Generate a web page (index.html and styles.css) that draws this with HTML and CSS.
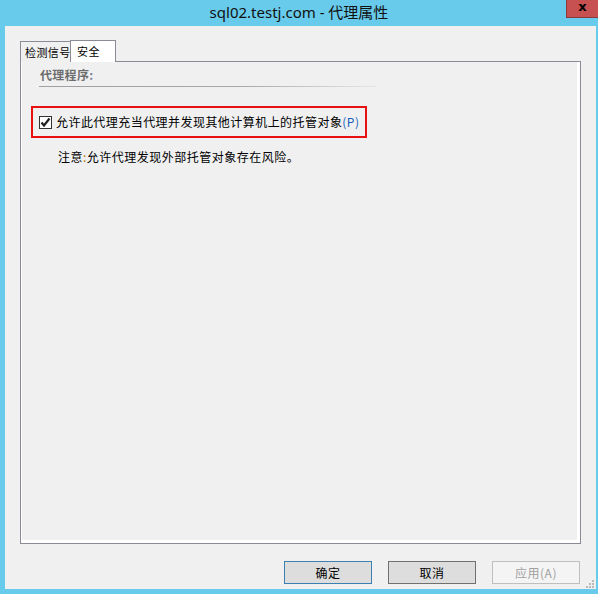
FILE: index.html
```html
<!DOCTYPE html>
<html lang="zh">
<head>
<meta charset="utf-8">
<link rel="stylesheet" href="styles.css">
</head>
<body>
<div class="window">
  <div class="titlebar">
    <div class="title-spacer"></div>
    <div class="title">sql02.testj.com - 代理属性</div>
    <div class="title-controls"><div class="close">x</div></div>
  </div>
  <div class="client">
    <div class="tabs">
      <div class="tab">检测信号</div>
      <div class="tab selected">安全</div>
    </div>
    <div class="panel">
      <div class="page">
        <div class="group-head">代理程序<span class="colon">:</span></div>
        <div class="group-line"></div>
        <div class="highlight">
          <label class="check-row">
            <span class="checkbox">
              <svg width="11" height="11" viewBox="0 0 11 11"><path d="M1.5 5.5 L4 8.5 L9.5 1.5" fill="none" stroke="#222" stroke-width="2.2"/></svg>
            </span>
            <span class="check-text">允许此代理充当代理并发现其他计算机上的托管对象<span class="accel">(P)</span></span>
          </label>
        </div>
        <div class="note">注意<span class="note-colon">:</span>允许代理发现外部托管对象存在风险。</div>
      </div>
    </div>
    <div class="buttons">
      <div class="btn default">确定</div>
      <div class="btn">取消</div>
      <div class="btn disabled">应用(A)</div>
    </div>
    <div class="grip">
      <svg width="10" height="10" viewBox="0 0 10 10">
        <rect x="7" y="1" width="2" height="2" fill="#b9b9b9"/>
        <rect x="4" y="4" width="2" height="2" fill="#b9b9b9"/>
        <rect x="7" y="4" width="2" height="2" fill="#b9b9b9"/>
        <rect x="1" y="7" width="2" height="2" fill="#b9b9b9"/>
        <rect x="4" y="7" width="2" height="2" fill="#b9b9b9"/>
        <rect x="7" y="7" width="2" height="2" fill="#b9b9b9"/>
      </svg>
    </div>
  </div>
</div>
</body>
</html>
```
FILE: styles.css
```css
* { box-sizing: border-box; }
html, body { margin: 0; padding: 0; }
body {
  width: 598px;
  height: 594px;
  overflow: hidden;
  font-family: "Noto Sans CJK SC", "Noto Sans", sans-serif;
  font-size: 12px;
}
.window {
  width: 598px;
  height: 594px;
  background: #68cbeb;
  display: flex;
  flex-direction: column;
}
.titlebar {
  height: 26px;
  display: grid;
  grid-template-columns: 1fr auto 1fr;
}
.title {
  font-family: "Noto Sans", "Noto Sans CJK SC", sans-serif;
  font-size: 15px;
  line-height: 24px;
  color: #111;
  white-space: nowrap;
}
.title-controls {
  display: flex;
  justify-content: flex-end;
  align-items: flex-start;
}
.close {
  width: 32px;
  height: 18px;
  background: #c75050;
  border-left: 1px solid #8a3a3a;
  border-bottom: 1px solid #8a3a3a;
  color: #000;
  font-family: "DejaVu Sans", sans-serif;
  font-weight: bold;
  font-size: 13px;
  line-height: 14px;
  text-align: center;
}
.client {
  flex: 1;
  margin: 0 2px 5px 5px;
  background: #f0f0f0;
  padding: 14px 15px 0 15px;
  display: flex;
  flex-direction: column;
  position: relative;
}
.tabs {
  display: flex;
  align-items: flex-end;
  height: 22px;
  margin-bottom: -1px;
  position: relative;
  z-index: 1;
}
.tab {
  width: 51px;
  height: 21px;
  border: 1px solid #898c95;
  border-bottom: none;
  padding: 0 0 0 4px;
  line-height: 20px;
  font-size: 11px;
  letter-spacing: 0.4px;
  background: #f0f0f0;
  color: #000;
  white-space: nowrap;
  overflow: hidden;
}
.tab.selected {
  height: 22px;
  background: #fff;
  width: 46px;
  margin-left: -1px;
  padding-left: 6px;
}
.panel {
  height: 483px;
  border: 1px solid #898c95;
  background: #fff;
  padding: 0 3px 3px 1px;
  display: flex;
}
.page {
  flex: 1;
  background: #f0f0f0;
  padding: 4px 0 0 18px;
  display: flex;
  flex-direction: column;
  align-items: flex-start;
}
.group-head {
  font-weight: bold;
  color: #6d6d6d;
  font-size: 12px;
  line-height: 18px;
  letter-spacing: 0.3px;
}
.group-head .colon { color: #7a7f9a; }
.group-line {
  width: 337px;
  height: 1px;
  margin-top: 2px;
  margin-left: -1px;
  background: linear-gradient(to right, #a0a0a0, #a8a8a8 60%, #e6e6e6);
}
.highlight {
  margin-top: 19px;
  margin-left: -9px;
  width: 336px;
  height: 32px;
  border: 2px solid #e81010;
  padding: 0 0 0 6px;
  display: flex;
  align-items: center;
}
.check-row {
  display: flex;
  align-items: center;
  gap: 4px;
}
.checkbox {
  width: 13px;
  height: 13px;
  border: 1px solid #333;
  background: #fff;
  display: flex;
  align-items: center;
  justify-content: center;
}
.check-text {
  color: #000;
  letter-spacing: 0.45px;
  line-height: 16px;
}
.accel { color: #1560bd; }
.note {
  margin-top: 11px;
  margin-left: 18px;
  color: #000;
  line-height: 16px;
  letter-spacing: 0.5px;
}
.note-colon { color: #c07000; }
.buttons {
  display: flex;
  justify-content: flex-end;
  gap: 16px;
  margin-top: 17px;
  padding-right: 1px;
}
.btn {
  width: 88px;
  height: 23px;
  border: 1px solid #707070;
  background: #dddddd;
  text-align: center;
  line-height: 21px;
  color: #000;
  letter-spacing: 0.5px;
}
.btn.default { border-color: #3c7fb1; }
.btn.disabled {
  border-color: #bfbfbf;
  background: #f4f4f4;
  color: #a0a0a0;
}
.grip {
  position: absolute;
  right: 1px;
  bottom: 0;
  width: 10px;
  height: 10px;
  display: flex;
}
```
